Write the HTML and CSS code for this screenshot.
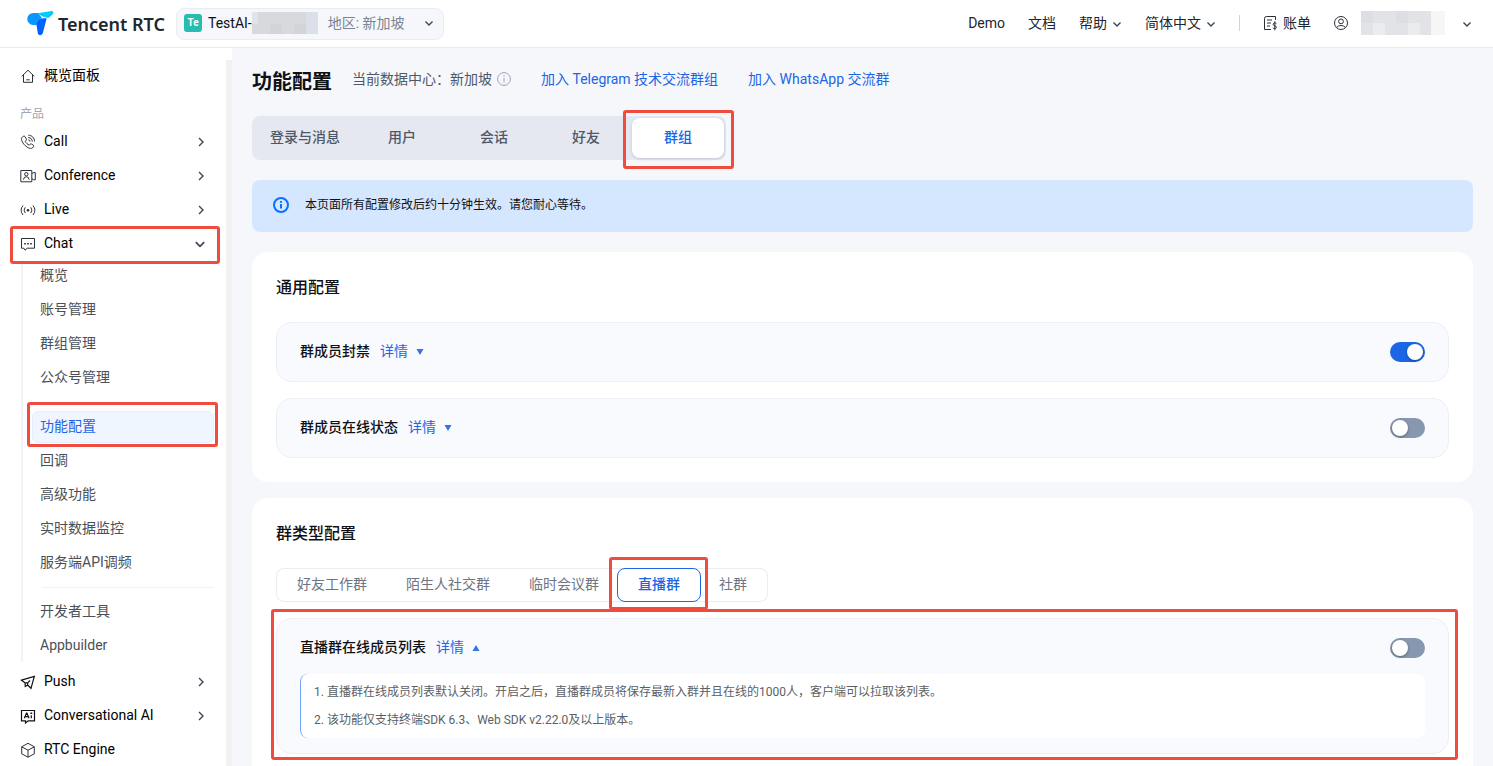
FILE: index.html
```html
<!DOCTYPE html>
<html lang="zh-CN">
<head>
    <meta charset="UTF-8">
    <meta name="viewport" content="width=device-width, initial-scale=1.0">
    <title>功能配置 - Tencent RTC</title>
    <link rel="stylesheet" href="styles.css">
</head>
<body>
    <svg class="defs" aria-hidden="true">
        <symbol id="down" viewBox="0 0 10 10"><path d="M1.500 3.500 5 7l3.500-3.500"/></symbol>
        <symbol id="right" viewBox="0 0 10 10"><path d="M3 1l4 4-4 4"/></symbol>
    </svg>

    <header class="header">
        <a href="#" class="logo">
            <svg width="27" height="25" viewBox="0 0 27 25">
                <path d="M11 2H6.500a6 6 0 0 0-.5 12h3.500L15 7z" fill="#0a96ff"/>
                <path d="M10.500 2.300 24.500 0c2.300 0 2.500 2.700.5 3.900L21.500 7C17 6.500 13 4.500 10.500 2.300z" fill="#00ccfa"/>
                <path d="M9.500 14c.8-4.800 4.500-7.500 10.200-6.700L16 21.500c-.9 3.500-5 3.500-5.300 0z" fill="#0062ff"/>
            </svg>
            <span>Tencent RTC</span>
        </a>
        <button type="button" class="app-select">
            <span class="app-badge">Te</span>
            <span class="app-name">TestAI-</span>
            <svg class="mosaic" width="66" height="22" viewBox="0 0 66 22" shape-rendering="crispEdges">
                <path fill="#d8d9dd" d="M0 0h66v22H0z"/>
                <path fill="#e1e3e8" d="M0 0h6v12H0z"/>
                <path fill="#d2d4d8" d="M18 12h12v10H18zM42 12h12v10H42z"/>
                <path fill="#dadfe8" d="M54 0h12v22H54z"/>
            </svg>
            <span class="app-region">地区: 新加坡</span>
            <svg class="chev" width="10" height="10"><use href="#down"/></svg>
        </button>
        <nav class="top-nav">
            <a href="#">Demo</a>
            <a href="#">文档</a>
            <a href="#">帮助 <svg class="chev" width="10" height="10"><use href="#down"/></svg></a>
            <a href="#">简体中文 <svg class="chev" width="10" height="10"><use href="#down"/></svg></a>
            <span class="top-line"></span>
            <a href="#" class="bill">
                <svg class="icon" width="15" height="16" viewBox="0 0 15 16">
                    <path d="M12.500 5V1.500H3.500Q1.500 1.500 1.500 3.500V14.500H8M4 5h5M4 8h4M4 11h3"/>
                    <path d="M13.500 8.800q-.6-.9-1.800-.9-1.600.2-1.600 1.500.1 1.100 1.700 1.400 1.700.3 1.600 1.500-.1 1.300-1.700 1.300-1.200 0-1.900-1M11.800 6.300v9"/>
                </svg>账单
            </a>
            <button type="button" class="account" aria-label="账号">
                <svg class="icon" width="14" height="14" viewBox="0 0 14 14">
                    <circle cx="7" cy="7" r="6.500"/><circle cx="7" cy="5.400" r="2.400"/>
                    <path d="M2.500 11.500Q4 9.500 7 9.500t4.500 2"/>
                </svg>
                <svg class="mosaic" width="84" height="24" viewBox="0 0 84 24" shape-rendering="crispEdges">
                    <path fill="#e2e3e6" d="M0 0h70v24H0z"/>
                    <path fill="#dbdfe3" d="M0 0h12v12H0zM35 0h12v12H35z"/>
                    <path fill="#ebecee" d="M12 12h12v12H12zM47 12h12v12H47z"/>
                    <path fill="#f6f6f7" d="M70 0h14v24H70z"/>
                </svg>
                <svg class="chev" width="10" height="10"><use href="#down"/></svg>
            </button>
        </nav>
    </header>

    <div class="layout">
        <aside class="sidebar">
            <nav class="menu">
                <a href="#" class="menu-item home">
                    <svg class="icon" width="16" height="16" viewBox="0 0 16 16"><path d="M1.800 8.300 8 2.200l6.200 6.100M3.500 7v7.300h9V7M6.300 11.800h3.400"/></svg>
                    <span>概览面板</span>
                </a>
                <div class="menu-title">产品</div>
                <a href="#" class="menu-item">
                    <svg class="icon" width="16" height="16" viewBox="0 0 16 16">
                        <path d="M3.200 2.300 1.900 3.600C.5 6 3.300 9.800 5.200 11.600c2 1.800 5.200 3.700 7.200 2.400l1.200-1.300q.5-.8-.3-1.500l-1.800-1.200q-.8-.4-1.400.3l-.8.8C7.500 10.400 6 9 5.200 7.300l.9-.9q.6-.6.2-1.400L5 2.700q-.8-1.200-1.800-.4z"/>
                        <path d="M8.300 1.200c3.500 0 6.300 2.800 6.300 6.300M8.300 3.500c2.300 0 4 1.800 4 4M8.300 5.700q1.700.1 1.800 1.800"/>
                    </svg>
                    <span>Call</span>
                    <svg class="chev" width="10" height="10"><use href="#right"/></svg>
                </a>
                <a href="#" class="menu-item">
                    <svg class="icon" width="16" height="16" viewBox="0 0 16 16">
                        <path d="M.8 2.500h11v11.300H.8zM12 5.500l1.800-.9h1.500v7.200h-1.500L12 10.800"/>
                        <circle cx="6.300" cy="6.200" r="1.700"/><path d="M3.500 11.700q.2-3 2.800-3t2.800 3"/>
                    </svg>
                    <span>Conference</span>
                    <svg class="chev" width="10" height="10"><use href="#right"/></svg>
                </a>
                <a href="#" class="menu-item">
                    <svg class="icon" width="16" height="16" viewBox="0 0 16 16">
                        <path d="M3 3.500Q-.8 8.200 3 13M13 3.500q3.800 4.700 0 9.500M5.200 5.300Q3 8.200 5.200 11M10.800 5.300q2.200 2.900 0 5.700"/>
                        <circle class="dot" cx="8" cy="8.200" r="1.300"/>
                    </svg>
                    <span>Live</span>
                    <svg class="chev" width="10" height="10"><use href="#right"/></svg>
                </a>
                <a href="#" class="menu-item">
                    <svg class="icon" width="16" height="16" viewBox="0 0 16 16">
                        <path d="M1.500 2.500h13v9.700H7.200L5 14.200l-1.200-2H1.500z"/>
                        <path class="dot" d="M4.200 7h1.600v1.500H4.200zM7.200 7h1.600v1.500H7.200zM10.200 7h1.600v1.500h-1.600z"/>
                    </svg>
                    <span>Chat</span>
                    <svg class="chev" width="12" height="12"><use href="#down"/></svg>
                    <i class="mark mark-chat"></i>
                </a>
                <div class="submenu">
                    <a href="#">概览</a>
                    <a href="#">账号管理</a>
                    <a href="#">群组管理</a>
                    <a href="#">公众号管理</a>
                    <hr>
                    <a href="#" class="active">功能配置<i class="mark mark-config"></i></a>
                    <a href="#">回调</a>
                    <a href="#">高级功能</a>
                    <a href="#">实时数据监控</a>
                    <a href="#">服务端API调频</a>
                    <hr>
                    <a href="#">开发者工具</a>
                    <a href="#">Appbuilder</a>
                </div>
                <a href="#" class="menu-item">
                    <svg class="icon" width="16" height="16" viewBox="0 0 16 16"><path class="bold" d="M1.500 6.200 14.300 2.500 11 14.300 7.600 11 5.300 12.500 5 8.800zM7.600 11l.2-2.300L10 6.500M5 8.800l2.800-.1"/></svg>
                    <span>Push</span>
                    <svg class="chev" width="10" height="10"><use href="#right"/></svg>
                </a>
                <a href="#" class="menu-item">
                    <svg class="icon" width="16" height="16" viewBox="0 0 16 16">
                        <path class="bold" d="M1.500 2.500h13v10.300H8.200L5.500 15v-2.200h-4z"/>
                        <path class="bold" d="M4.300 10.300 6.500 5h.4l2.200 5.300M5.200 8.700h3M11.300 7.300v3M11.300 4.500v1.600M10.300 5.400h2"/>
                    </svg>
                    <span>Conversational AI</span>
                    <svg class="chev" width="10" height="10"><use href="#right"/></svg>
                </a>
                <a href="#" class="menu-item">
                    <svg class="icon" width="16" height="16" viewBox="0 0 16 16"><path d="M8 1.300 14.300 4.800v7L8 15.200l-6.300-3.400v-7zM1.700 4.800 8 8.200l6.300-3.400M8 8.200v7"/></svg>
                    <span>RTC Engine</span>
                </a>
            </nav>
        </aside>

        <main class="main">
            <div class="page-head">
                <h1>功能配置</h1>
                <span class="center">当前数据中心：新加坡
                    <svg width="14" height="14" viewBox="0 0 14 14"><circle cx="7" cy="7" r="6.400"/><path d="M7 6v4.500M7 3.300v1.400"/></svg>
                </span>
                <a href="#">加入 Telegram 技术交流群组</a>
                <a href="#">加入 WhatsApp 交流群</a>
            </div>

            <div class="tabs">
                <button type="button">登录与消息</button>
                <button type="button">用户</button>
                <button type="button">会话</button>
                <button type="button">好友</button>
                <button type="button" class="active">群组<i class="mark mark-tab"></i></button>
            </div>

            <div class="notice">
                <svg width="16" height="16" viewBox="0 0 16 16"><circle cx="8" cy="8" r="7"/><path d="M8 7v4.500M8 4v1.800"/></svg>
                <span>本页面所有配置修改后约十分钟生效。请您耐心等待。</span>
            </div>

            <section class="card">
                <h2>通用配置</h2>
                <div class="item">
                    <div class="item-row">
                        <label for="ban">群成员封禁</label>
                        <a href="#">详情 <svg width="8" height="6"><path d="M.5 0h7L4 6z"/></svg></a>
                        <input type="checkbox" class="switch" id="ban" checked>
                    </div>
                </div>
                <div class="item">
                    <div class="item-row">
                        <label for="online">群成员在线状态</label>
                        <a href="#">详情 <svg width="8" height="6"><path d="M.5 0h7L4 6z"/></svg></a>
                        <input type="checkbox" class="switch" id="online">
                    </div>
                </div>
            </section>

            <section class="card">
                <h2>群类型配置</h2>
                <div class="type-tabs">
                    <button type="button">好友工作群</button>
                    <button type="button">陌生人社交群</button>
                    <button type="button">临时会议群</button>
                    <button type="button" class="active">直播群<i class="mark mark-type"></i></button>
                    <button type="button">社群</button>
                </div>
                <div class="item">
                    <div class="item-row">
                        <label for="members">直播群在线成员列表</label>
                        <a href="#">详情 <svg width="8" height="6"><path d="M4 0l3.500 6h-7z"/></svg></a>
                        <input type="checkbox" class="switch" id="members">
                    </div>
                    <ol class="detail">
                        <li>直播群在线成员列表默认关闭。开启之后，直播群成员将保存最新入群并且在线的1000人，客户端可以拉取该列表。</li>
                        <li>该功能仅支持终端SDK 6.3、Web SDK v2.22.0及以上版本。</li>
                    </ol>
                    <i class="mark mark-item"></i>
                </div>
            </section>
        </main>
    </div>
</body>
</html>
```
FILE: styles.css
```css
* {
    box-sizing: border-box;
}
body {
    margin: 0;
    height: 100vh;
    display: flex;
    flex-direction: column;
    overflow: hidden;
    font-family: Roboto, "Noto Sans CJK SC", sans-serif;
    font-size: 14px;
    line-height: 22px;
    color: #0f1014;
    background: #f5f7fb;
}
a {
    color: inherit;
    text-decoration: none;
}
button {
    border: none;
    padding: 0;
    background: none;
    font: inherit;
    color: inherit;
    cursor: pointer;
}
.defs {
    position: absolute;
    width: 0;
    height: 0;
}
.icon {
    flex: none;
    fill: none;
    stroke: #2b2f38;
}
.icon .dot {
    fill: #2b2f38;
    stroke: none;
}
.icon .bold {
    stroke: #111;
    stroke-width: 1.2;
}
.chev {
    flex: none;
    fill: none;
    stroke: #3c4556;
    stroke-width: 1.4;
}

/* header */
.header {
    flex: none;
    height: 48px;
    display: flex;
    align-items: center;
    padding: 0 21px 0 27px;
    background: #fff;
    border-bottom: 1px solid #e9ebf1;
}
.logo {
    display: flex;
    align-items: center;
    gap: 4px;
    font-family: "Noto Sans", sans-serif;
    font-size: 18px;
    font-weight: 600;
    color: #22262e;
}
.app-select {
    display: flex;
    align-items: center;
    height: 32px;
    margin-left: 11px;
    padding: 0 9px 2px 7px;
    background: #f5f7fb;
    border: 1px solid #e9ecf3;
    border-radius: 8px;
}
.app-badge {
    width: 18px;
    height: 18px;
    margin-right: 6px;
    border-radius: 3px;
    background: #26bcb0;
    color: #fff;
    font-size: 10px;
    font-weight: 700;
    line-height: 18px;
}
.app-region {
    margin: 0 19px 0 10px;
    color: #7a8494;
}
.top-nav {
    display: flex;
    align-items: center;
    gap: 23px;
    margin-left: auto;
    padding-bottom: 2px;
    color: #22262e;
}
.top-nav a,
.account {
    display: flex;
    align-items: center;
    gap: 5px;
}
.top-nav .chev {
    margin-top: 2px;
}
.top-line {
    width: 1px;
    height: 16px;
    background: #cfd3dc;
}
.account .mosaic {
    margin: 0 12px 0 8px;
}

/* sidebar */
.layout {
    flex: 1;
    min-height: 0;
    display: flex;
}
.sidebar {
    flex: none;
    width: 232px;
    padding-top: 12px;
    background: #fff;
}
.menu {
    height: 100%;
    padding: 0 12px;
    border-right: 6px solid #f1f1f1;
}
.menu-item {
    position: relative;
    display: flex;
    align-items: center;
    gap: 8px;
    height: 34px;
    padding: 0 8px;
    color: #000;
}
.menu-item.home {
    height: 30px;
}
.menu-item svg {
    margin-top: 2px;
}
.menu-item .chev {
    margin-left: auto;
}
.menu-title {
    padding: 17px 8px 3px;
    font-size: 12px;
    line-height: 14px;
    color: #a0a6b5;
}
.submenu {
    margin-left: 9px;
    padding-left: 9px;
    border-left: 2px solid #f2f3f9;
}
.submenu a {
    position: relative;
    display: block;
    height: 32px;
    margin-bottom: 2px;
    padding: 0 7px;
    border: 1px solid transparent;
    border-radius: 6px;
    line-height: 28px;
    color: #4b4f57;
}
.submenu .active {
    background: #f0f6ff;
    border-color: #e6eefd;
    color: #1c66e5;
}
.submenu hr {
    height: 1px;
    margin: 8px 0 8px 10px;
    border: none;
    background: #f0f2f8;
}

/* main */
.main {
    flex: 1;
    min-width: 0;
    padding: 20px;
}
.page-head {
    display: flex;
    align-items: flex-start;
    height: 28px;
}
.page-head h1 {
    margin: 0 20px 0 0;
    font-size: 20px;
    font-weight: 700;
    line-height: 28px;
}
.page-head a {
    margin-left: 30px;
    color: #1c66e5;
}
.center {
    display: flex;
    align-items: center;
    gap: 5px;
    color: #4f5868;
}
.center svg {
    fill: none;
    stroke: #9aa3b5;
}
.tabs {
    display: flex;
    width: fit-content;
    margin: 20px 0;
    padding: 2px;
    border-radius: 8px;
    background: #e5e8f0;
}
.tabs button {
    position: relative;
    min-width: 92px;
    height: 40px;
    padding: 0 16px 2px;
    border-radius: 8px;
    font-weight: 500;
    color: #4f5868;
}
.tabs .active {
    background: #fff;
    box-shadow: 0 1px 3px rgba(40, 60, 100, 0.2);
    color: #1c66e5;
}
.notice {
    display: flex;
    align-items: center;
    gap: 16px;
    height: 52px;
    padding: 0 21px 2px;
    border-radius: 8px;
    background: #d5e7ff;
    font-size: 12px;
}
.notice svg {
    fill: none;
    stroke: #0a70ff;
    stroke-width: 2;
}
.card {
    margin-top: 20px;
    padding: 24px;
    border-radius: 16px;
    background: #fff;
}
.card + .card {
    margin-top: 16px;
}
.card h2 {
    margin: 0 0 22px;
    font-size: 16px;
    font-weight: 500;
    line-height: 24px;
}
.item {
    position: relative;
    padding: 0 23px;
    border: 1px solid #eceff6;
    border-radius: 16px;
    background: #f9fafe;
}
.item + .item,
.type-tabs + .item {
    margin-top: 16px;
}
.item-row {
    display: flex;
    align-items: center;
    gap: 10px;
    height: 58px;
}
.item-row label {
    padding-bottom: 2px;
    font-weight: 500;
}
.item-row a {
    display: flex;
    align-items: center;
    gap: 8px;
    padding-bottom: 2px;
    color: #1c66e5;
}
.item-row a svg {
    margin-top: 2px;
    fill: #2f74e8;
}
.switch {
    appearance: none;
    width: 35px;
    height: 20px;
    margin: 0 0 0 auto;
    padding: 2px;
    border-radius: 10px;
    background: #8797af;
    cursor: pointer;
}
.switch::before {
    content: "";
    display: block;
    width: 16px;
    height: 16px;
    border-radius: 50%;
    background: #fff;
    box-shadow: 0 1px 3px rgba(0, 0, 0, 0.35);
}
.switch:checked {
    background: #1c66e5;
}
.switch:checked::before {
    margin-left: auto;
}
.type-tabs {
    display: flex;
    width: fit-content;
    border-radius: 8px;
    box-shadow: inset 0 0 0 1px #e9ecf3;
}
.type-tabs button {
    position: relative;
    height: 34px;
    padding: 0 20px 2px;
    border: 1px solid transparent;
    border-radius: 8px;
    color: #6d7585;
}
.type-tabs button + button {
    margin-left: -3px;
}
.type-tabs .active {
    border-color: #1c66e5;
    background: #fff;
    color: #1c66e5;
    font-weight: 500;
}
.detail {
    margin: -3px 0 15px;
    padding: 4px 12px 4px 26px;
    border-left: 1px solid #6ea6fb;
    border-radius: 8px;
    background: #fff;
    font-size: 12px;
    line-height: 28px;
    color: #5b5f66;
}

/* red highlight frames */
.mark {
    position: absolute;
    z-index: 1;
    border: 3px solid #f04b3f;
    border-radius: 3px;
    pointer-events: none;
}
.mark-chat {
    inset: 0 -6px -4px -2px;
}
.mark-config {
    inset: -10px -5px -5px -6px;
}
.mark-tab {
    inset: -8px -10px -11px -9px;
}
.mark-type {
    inset: -12px -8px -9px -9px;
}
.mark-item {
    inset: -10px -10px -7px -6px;
}
```
